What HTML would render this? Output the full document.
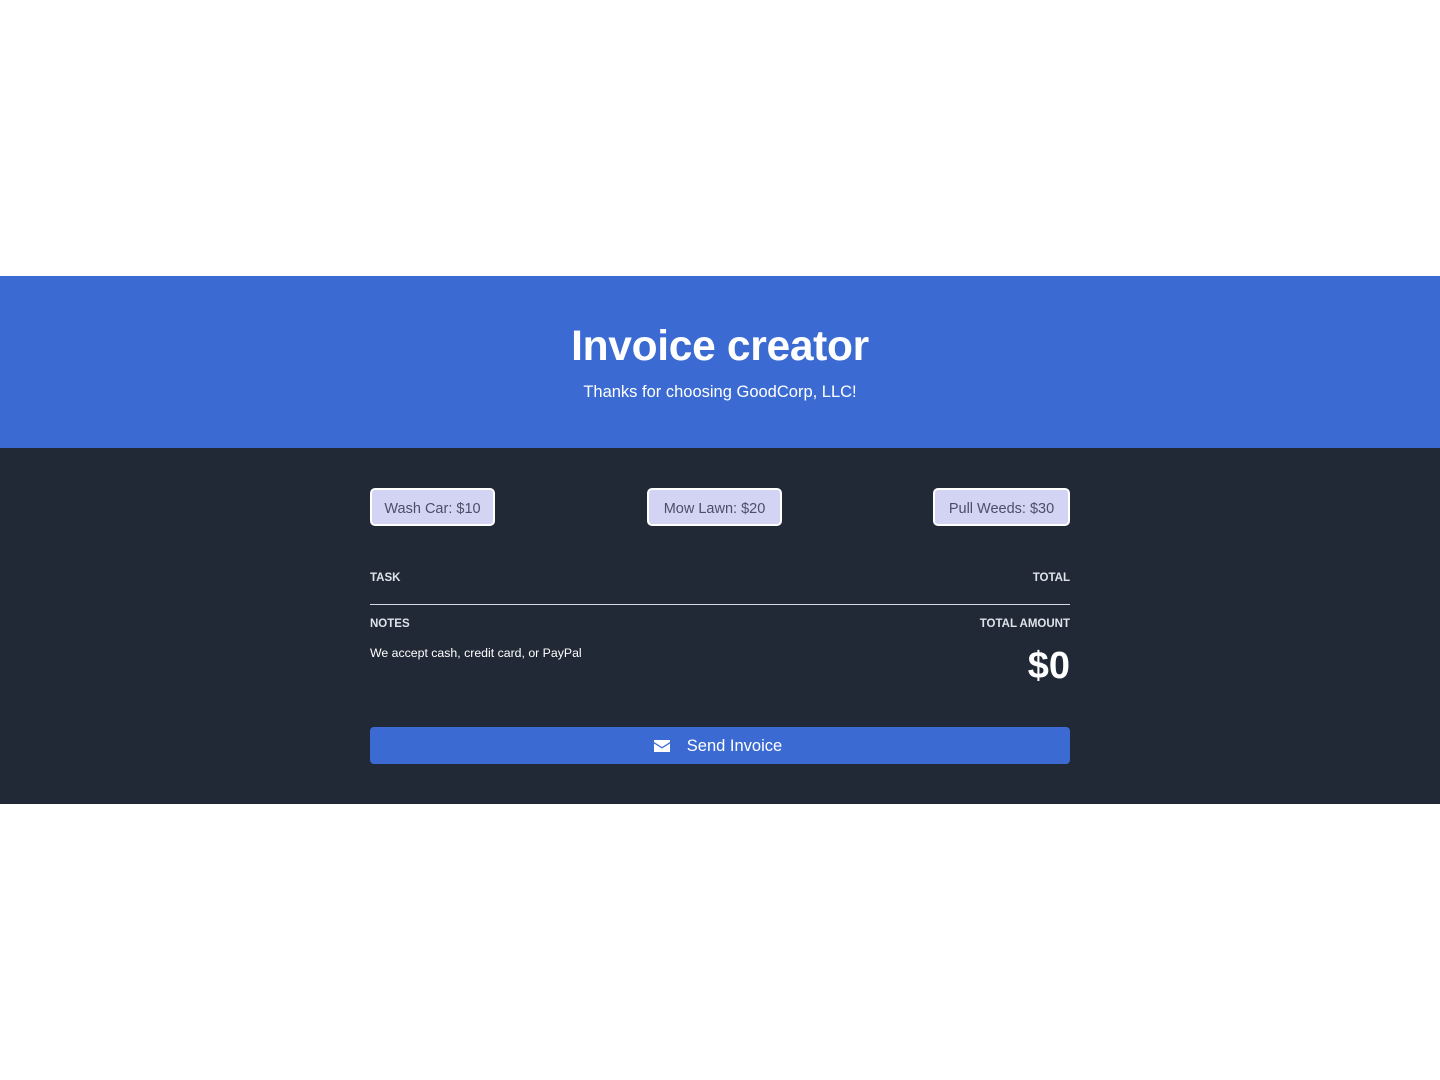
<!DOCTYPE html>
<html><head><style>
body{margin:0;background:#fff;font-family:"Liberation Sans",sans-serif;}
.hdr{position:absolute;top:276px;left:0;width:1440px;height:172px;background:#3b6bd2;color:#fff;text-align:center;}
.dark{position:absolute;top:448px;left:0;width:1440px;height:356px;background:#212936;color:#fff;}
.btn{position:absolute;top:40px;height:34px;background:#d3d4f4;border:2px solid #fff;border-radius:5px;color:#4a4f66;font-size:14.5px;line-height:38px;text-align:center;box-sizing:content-box;}
.lbl{position:absolute;font-size:11.5px;font-weight:bold;color:#dfe3ea;}
</style></head><body>
<div class="hdr">
<div style="position:absolute;top:47px;width:100%;font-size:42.5px;font-weight:bold;letter-spacing:-0.3px">Invoice creator</div>
<div style="position:absolute;top:107px;width:100%;font-size:16.5px">Thanks for choosing GoodCorp, LLC!</div>
</div>
<div class="dark">
<div class="btn" style="left:370px;width:121px">Wash Car: $10</div>
<div class="btn" style="left:647px;width:131px">Mow Lawn: $20</div>
<div class="btn" style="left:933px;width:133px">Pull Weeds: $30</div>
<div class="lbl" style="left:370px;top:124px">TASK</div>
<div class="lbl" style="right:370px;top:124px">TOTAL</div>
<div style="position:absolute;left:370px;top:156px;width:700px;height:1px;background:#d5d9e2"></div>
<div class="lbl" style="left:370px;top:170px">NOTES</div>
<div class="lbl" style="right:370px;top:170px">TOTAL AMOUNT</div>
<div style="position:absolute;left:370px;top:198px;font-size:12.3px">We accept cash, credit card, or PayPal</div>
<div style="position:absolute;right:370px;top:197px;font-size:38px;font-weight:bold">$0</div>
<div style="position:absolute;left:370px;top:279px;width:700px;height:37px;background:#3b6bd2;border-radius:4px;font-size:16.5px;line-height:38px;text-align:center">
<svg width="16" height="12" viewBox="0 0 16 12" style="vertical-align:-1px;margin-right:17px;margin-left:-4px"><path d="M0 0h16v2L8 7 0 2z" fill="#fff"/><path d="M0 3.5L8 8.5l8-5V12H0z" fill="#fff"/></svg>Send Invoice</div>
</div>
</body></html>
